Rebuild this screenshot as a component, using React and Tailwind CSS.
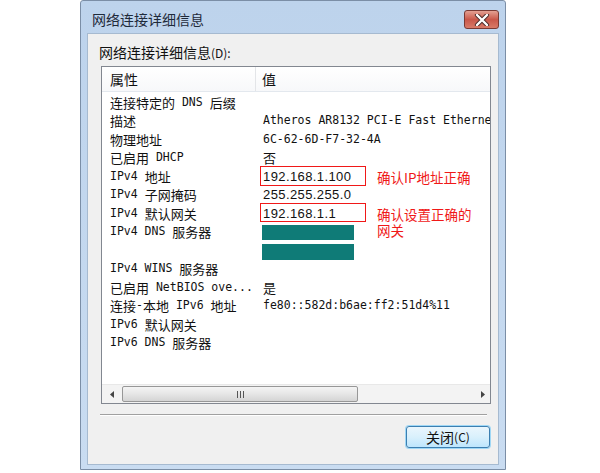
import React from "react";

const rows = [
  ["连接特定的 DNS 后缀", ""],
  ["描述", "Atheros AR8132 PCI-E Fast Ethernet Controller"],
  ["物理地址", "6C-62-6D-F7-32-4A"],
  ["已启用 DHCP", "否"],
  ["IPv4 地址", "ip:192.168.1.100"],
  ["IPv4 子网掩码", "ip:255.255.255.0"],
  ["IPv4 默认网关", "ip:192.168.1.1"],
  ["IPv4 DNS 服务器", "bar1"],
  ["", "bar2"],
  ["IPv4 WINS 服务器", ""],
  ["已启用 NetBIOS ove...", "是"],
  ["连接-本地 IPv6 地址", "fe80::582d:b6ae:ff2:51d4%11"],
  ["IPv6 默认网关", ""],
  ["IPv6 DNS 服务器", ""],
];

// 中文用黑体，英文数字用等宽
function Mixed({ text }) {
  const parts = text.split(/([\u3000-\u9fff]+)/).filter(Boolean);
  return parts.map((p, i) =>
    /[\u3000-\u9fff]/.test(p) ? (
      <span key={i} className="font-['Noto_Sans_CJK_SC',sans-serif] text-[13px]">{p}</span>
    ) : (
      <span key={i} className="font-['DejaVu_Sans_Mono',monospace] text-[11.5px] whitespace-pre">{p}</span>
    )
  );
}

function Value({ v }) {
  if (v === "bar1") return <div className="w-[92px] h-[15px] bg-[#0f7b77] -ml-[1px] mt-[1px]" />;
  if (v === "bar2") return <div className="w-[92px] h-[16px] bg-[#0f7b77] -ml-[1px] mt-[3px]" />;
  if (v.startsWith("ip:"))
    return (
      <span className="font-['Liberation_Sans',sans-serif] text-[13px] tracking-[0.4px]">{v.slice(3)}</span>
    );
  return <Mixed text={v} />;
}

export default function App() {
  return (
    <div className="w-[600px] h-[473px] bg-white overflow-hidden text-[#111]">
      {/* 窗口 */}
      <div className="ml-[80px] w-[426px] h-[470px] border border-[#7b8ea6] bg-gradient-to-b from-[#bdd3ec] to-[#c9dcf1] flex flex-col rounded-t-[3px]">
        {/* 标题栏 */}
        <div className="h-[32px] flex items-start justify-between pl-[11px] pr-[6px]">
          <div className="mt-[9px] text-[14px] leading-[18px] font-['Noto_Sans_CJK_SC',sans-serif] text-[#1e2a3a]">
            网络连接详细信息
          </div>
          <div className="mt-[9px] w-[35px] h-[19px] rounded-[3px] border border-[#7a3a34] bg-gradient-to-b from-[#e3a093] via-[#c9574a] to-[#d87a68] flex items-center justify-center">
            <svg width="16" height="12" viewBox="0 0 16 12">
              <path d="M3 1 L13 11 M13 1 L3 11" stroke="#4a2a28" strokeWidth="4.2" strokeLinecap="round" />
              <path d="M3 1 L13 11 M13 1 L3 11" stroke="#ffffff" strokeWidth="2.4" strokeLinecap="round" />
            </svg>
          </div>
        </div>
        {/* 内容区 */}
        <div className="mx-[6px] mb-[4px] flex-1 bg-[#f0f0f0] border border-[#a6bad0] flex flex-col">
          <div className="mt-[10px] ml-[11px] h-[16px] leading-[16px] text-[14px] font-['Noto_Sans_CJK_SC',sans-serif]">
            网络连接详细信息<span className="text-[12px]">(D):</span>
          </div>
          {/* 列表 */}
          <div className="relative mt-[6px] ml-[13px] w-[390px] h-[338px] border border-[#828790] bg-white flex flex-col overflow-hidden">
            <div className="h-[25px] flex items-center border-b border-[#e3e8ee] bg-gradient-to-b from-white to-[#f7f8fa] font-['Noto_Sans_CJK_SC',sans-serif] text-[14px]">
              <div className="w-[154px] pl-[8px] h-full flex items-center border-r border-[#e3e5e8]">属性</div>
              <div className="pl-[6px]">值</div>
            </div>
            <div className="pt-[1px]">
              {rows.map(([k, v], i) => (
                <div key={i} className="h-[18.5px] flex items-center whitespace-nowrap">
                  <div className="w-[161px] pl-[8px] shrink-0 flex items-center">
                    <Mixed text={k} />
                  </div>
                  <div className="flex items-center">
                    <Value v={v} />
                  </div>
                </div>
              ))}
            </div>
            {/* 红框标注 */}
            <div className="absolute left-[158px] top-[99px] w-[106px] h-[20px] border-[1.5px] border-[#f01818]" />
            <div className="absolute left-[158px] top-[136px] w-[106px] h-[19px] border-[1.5px] border-[#f01818]" />
            <div className="absolute left-[275px] top-[102px] text-[13.5px] leading-[16px] text-[#f01818] font-['Noto_Sans_CJK_SC',sans-serif] whitespace-nowrap">
              确认IP地址正确
            </div>
            <div className="absolute left-[275px] top-[139px] w-[98px] text-[13.5px] leading-[16px] text-[#f01818] font-['Noto_Sans_CJK_SC',sans-serif]">
              确认设置正确的网关
            </div>
            {/* 滚动条 */}
            <div className="mt-auto h-[19px] bg-[#f3f3f3] border-t border-[#e8e8e8] flex items-center">
              <div className="w-[20px] flex justify-center">
                <svg width="5" height="7" viewBox="0 0 5 7"><path d="M4 0 L0 3.5 L4 7 Z" fill="#444" /></svg>
              </div>
              <div className="w-[236px] h-[16px] rounded-[2px] border border-[#979797] bg-gradient-to-b from-[#f4f4f4] via-[#e6e6e6] to-[#d4d4d4] flex items-center justify-center">
                <svg width="7" height="7" viewBox="0 0 7 7">
                  <path d="M0.5 0 V7 M3.5 0 V7 M6.5 0 V7" stroke="#555" strokeWidth="1" />
                </svg>
              </div>
              <div className="flex-1" />
              <div className="w-[16px] flex justify-center">
                <svg width="5" height="7" viewBox="0 0 5 7"><path d="M1 0 L5 3.5 L1 7 Z" fill="#444" /></svg>
              </div>
            </div>
          </div>
          {/* 分隔线 */}
          <div className="mt-[10px] ml-[12px] mr-[11px] h-[2px] border-t border-[#a0a0a0] border-b border-b-white" />
          {/* 按钮 */}
          <div className="mt-[10px] flex justify-end mr-[8px]">
            <div className="w-[84px] h-[22px] rounded-[3px] border border-[#3c7fb1] shadow-[0_0_0_1px_#9fd7f5] bg-gradient-to-b from-[#eaf6fd] via-[#d9f0fc] to-[#bee6fd] flex items-center justify-center text-[14px] font-['Noto_Sans_CJK_SC',sans-serif]">
              关闭<span className="text-[12px]">(C)</span>
            </div>
          </div>
        </div>
      </div>
    </div>
  );
}
